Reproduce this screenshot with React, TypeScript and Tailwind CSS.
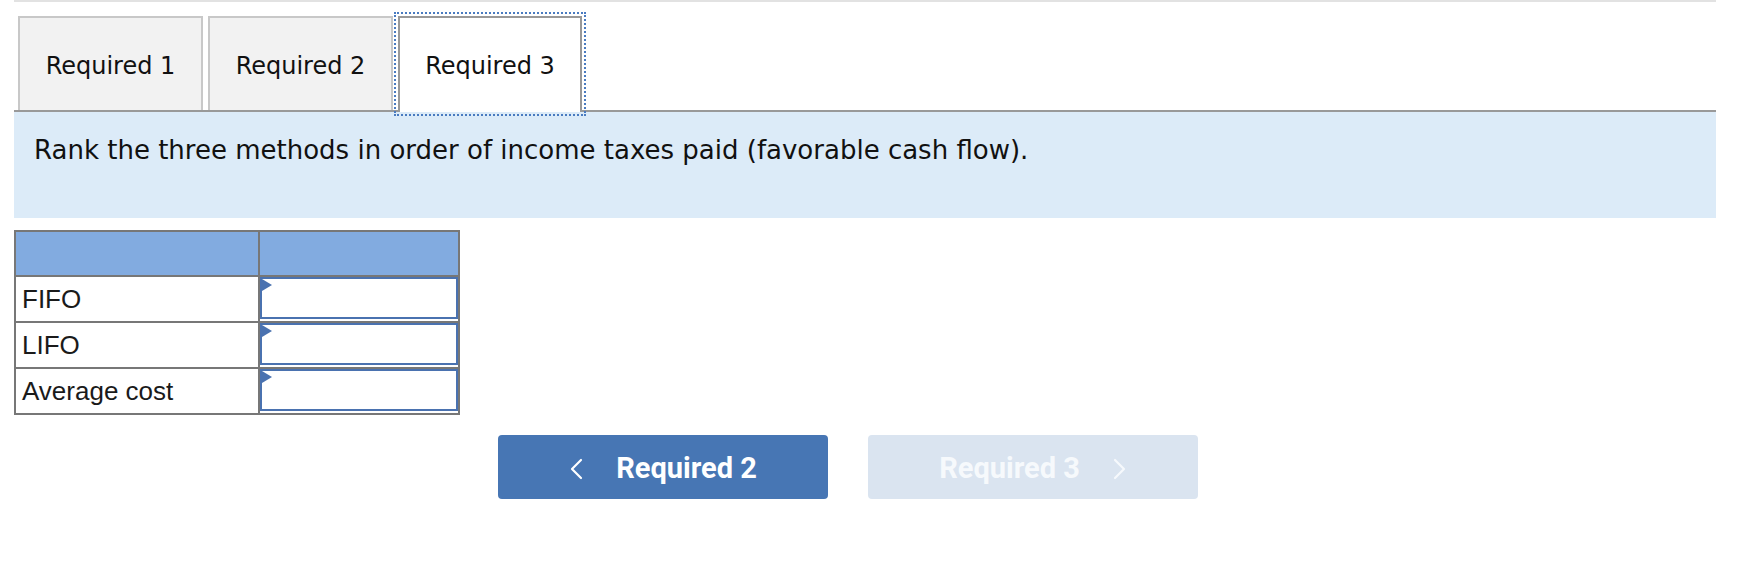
import React from 'react';

const rows = ['FIFO', 'LIFO', 'Average cost'];

function Tab({ label, active = false }: { label: string; active?: boolean }) {
  if (active) {
    return (
      <div className="relative -mb-[2px] flex h-[96px] w-[184px] items-center justify-center border-2 border-b-0 border-[#999999] bg-white pt-[2px] outline-2 outline-dotted outline-offset-[2px] outline-[#4a7bc0]">
        {label}
      </div>
    );
  }
  return (
    <div className="flex h-[94px] w-[185px] items-center justify-center border-2 border-b-0 border-[#c8c8c8] bg-[#f2f2f2] pt-[4px]">
      {label}
    </div>
  );
}

function Chevron({ dir }: { dir: 'left' | 'right' }) {
  return (
    <svg width="14" height="22" viewBox="0 0 14 22" fill="none">
      <polyline
        points={dir === 'left' ? '12,2 3,11 12,20' : '2,2 11,11 2,20'}
        stroke="currentColor"
        strokeWidth="2.2"
        strokeLinecap="round"
        strokeLinejoin="round"
      />
    </svg>
  );
}

export default function App() {
  return (
    <div className="h-[566px] w-[1739px] bg-white text-black">
      <div className="ml-[14px] w-[1702px]">
        <div className="h-[2px] bg-[#e2e2e2]" />

        {/* Tabs */}
        <div
          className="mt-[14px] flex items-end gap-[5px] border-b-2 border-[#999999] pl-[4px] text-[24px] text-[#111]"
          style={{ fontFamily: '"DejaVu Sans", Verdana, sans-serif' }}
        >
          <Tab label="Required 1" />
          <Tab label="Required 2" />
          <Tab label="Required 3" active />
        </div>

        {/* Instructions */}
        <div
          className="h-[106px] bg-[#dcebf8] pl-[20px] pt-[19px] text-[26px] text-[#111]"
          style={{ fontFamily: '"DejaVu Sans", Verdana, sans-serif' }}
        >
          Rank the three methods in order of income taxes paid (favorable cash flow).
        </div>

        {/* Table */}
        <div
          className="mt-[12px] w-[446px] border-2 border-[#777777] text-[26px] text-[#1a1a1a]"
          style={{ fontFamily: '"Liberation Sans", Arial, sans-serif' }}
        >
          <div className="flex h-[43px] bg-[#82abe0]">
            <div className="w-[244px] border-r-2 border-[#777777]" />
            <div className="flex-1" />
          </div>
          {rows.map((r) => (
            <div key={r} className="flex h-[46px] border-t-2 border-[#777777]">
              <div className="flex w-[244px] items-center border-r-2 border-[#777777] pl-[6px]">{r}</div>
              <div className="relative flex-1 pb-[2px]">
                <div className="h-full border-2 border-[#4a72b0] bg-white" />
                <svg className="absolute left-[2px] top-[2px]" width="10" height="12" viewBox="0 0 10 12">
                  <polygon points="0,0 10,6 0,12" fill="#4a72b0" />
                </svg>
              </div>
            </div>
          ))}
        </div>

        {/* Navigation */}
        <div
          className="mt-[20px] flex gap-[40px] pl-[484px] text-[29px] font-bold"
          style={{ fontFamily: 'Roboto, "Liberation Sans", sans-serif' }}
        >
          <button className="flex h-[64px] w-[330px] items-center justify-center gap-[33px] rounded-[4px] bg-[#4776b4] pt-[3px] text-white">
            <Chevron dir="left" />
            <span>Required 2</span>
          </button>
          <button className="flex h-[64px] w-[330px] items-center justify-center gap-[33px] rounded-[4px] bg-[#dae4f0] pt-[3px] text-[#f6f9fc]">
            <span>Required 3</span>
            <Chevron dir="right" />
          </button>
        </div>
      </div>
    </div>
  );
}
